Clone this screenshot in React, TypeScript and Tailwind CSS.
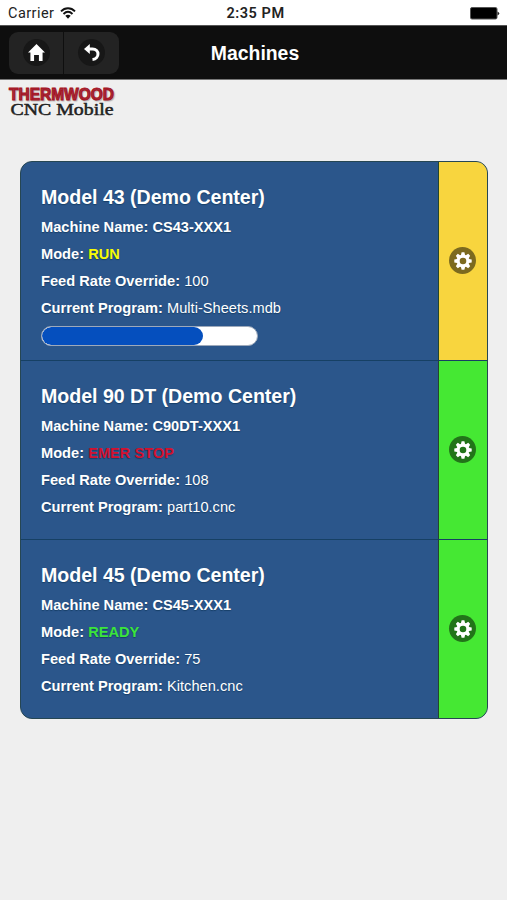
type Machine = {
    title: string;
    name: string;
    mode: string;
    modeClass: string;
    feedRate: number;
    program: string;
    progress?: number;
    rowClass: string;
    sideClass: string;
};

const machines: Machine[] = [
    {
        title: "Model 43 (Demo Center)",
        name: "CS43-XXX1",
        mode: "RUN",
        modeClass: "text-[#f7fb05]",
        feedRate: 100,
        program: "Multi-Sheets.mdb",
        progress: 75,
        rowClass: "h-[199px]",
        sideClass: "bg-[#f8d53e]",
    },
    {
        title: "Model 90 DT (Demo Center)",
        name: "C90DT-XXX1",
        mode: "EMER STOP",
        modeClass: "text-[#d3112f]",
        feedRate: 108,
        program: "part10.cnc",
        rowClass: "h-[179px]",
        sideClass: "bg-[#45e833]",
    },
    {
        title: "Model 45 (Demo Center)",
        name: "CS45-XXX1",
        mode: "READY",
        modeClass: "text-[#3be53b]",
        feedRate: 75,
        program: "Kitchen.cnc",
        rowClass: "h-[178px]",
        sideClass: "bg-[#45e833]",
    },
];

function GearIcon() {
    return (
        <svg viewBox="-9 -9 18 18" className="size-[18px]" fill="#fff">
            <circle r="4.9" fill="none" stroke="#fff" strokeWidth="3.2" />
            {[0, 45, 90, 135, 180, 225, 270, 315].map((angle) => (
                <path key={angle} d="M-2.1-5.8 L-1.4-8.7 H1.4 L2.1-5.8Z" transform={`rotate(${angle})`} />
            ))}
        </svg>
    );
}

function StatusBar() {
    return (
        <div className="grid h-[25px] grid-cols-3 items-center bg-white pt-[3px] pr-[7px] pl-[8px] text-[14.5px] leading-none text-[#222]">
            <div className="flex items-center gap-[6px]">
                <span className="font-[Roboto,sans-serif] tracking-[0.45px]">Carrier</span>
                <svg viewBox="0 0 16 12" className="-mt-[2px] h-[12px] w-[16px]" fill="none" stroke="#111" strokeWidth="1.9">
                    <path d="M1 4.3C5 .2 11 .2 15 4.3M3.5 7C6.3 4.3 9.7 4.3 12.5 7" />
                    <path d="M5.3 8.8C6.9 7.3 9.1 7.3 10.7 8.8L8 11.7Z" fill="#111" stroke="none" />
                </svg>
            </div>
            <span className="pl-[3px] text-center font-[Roboto,sans-serif] font-semibold tracking-[0.55px]">2:35 PM</span>
            <svg viewBox="0 0 31 13" className="-mt-[2px] h-[13px] w-[31px] justify-self-end">
                <rect x="1.5" y=".5" width="26.5" height="11.5" rx="1.5" fill="#000" stroke="#555" />
                <path d="M28.5 4.5Q32 6.5 28.5 8.5Z" fill="#222" />
            </svg>
        </div>
    );
}

function Header() {
    return (
        <header className="grid h-[55px] grid-cols-[1fr_auto_1fr] items-center border-t border-b border-t-[#555] border-b-[#777] bg-[#0e0e0e] pl-[9px]">
            <div className="flex h-[42px] w-[110px] overflow-hidden rounded-[9px] bg-[#232323]">
                <button className="flex w-[55px] items-center justify-center border-r border-[#0f0f0f]">
                    <span className="flex size-[27px] items-center justify-center rounded-full bg-[#171717]">
                        <svg viewBox="0 0 14 14" className="size-[17px]" fill="#fff">
                            <path d="M7 0 0 7H2V14H5V9H9V14H12V7H14Z" />
                        </svg>
                    </span>
                </button>
                <button className="flex flex-1 items-center justify-center">
                    <span className="flex size-[27px] items-center justify-center rounded-full bg-[#171717]">
                        <svg viewBox="0 0 16 18" className="h-[18px] w-[16px]">
                            <path d="M0 5 5.8 0V10Z" fill="#fff" />
                            <path d="M5 5H8.5C15.8 5 15.8 14.8 8.5 15.6" fill="none" stroke="#fff" strokeWidth="3" />
                        </svg>
                    </span>
                </button>
            </div>
            <h1 className="-ml-[6px] pt-[2px] text-[19.4px] leading-none font-bold text-white">Machines</h1>
            <div />
        </header>
    );
}

function Logo() {
    return (
        <svg viewBox="0 -6 110 40" className="h-[40px] w-[110px]">
            <text x="1" y="14" textLength="105" lengthAdjust="spacingAndGlyphs" className="[text-shadow:1px_1px_1px_#8887]" fontFamily="Liberation Sans, sans-serif" fontWeight="bold" fontSize="17" fill="#a80f20" stroke="#a80f20" strokeWidth="1">THERMWOOD</text>
            <text x="2.5" y="28.5" textLength="103" lengthAdjust="spacingAndGlyphs" fontFamily="Liberation Serif, serif" fontSize="17" fill="#222" stroke="#222" strokeWidth=".5">CNC Mobile</text>
        </svg>
    );
}

function MachineRow({ machine }: { machine: Machine }) {
    return (
        <li className={`flex ${machine.rowClass}`}>
            <div className="flex-1 pt-[24px] pl-[20px] text-[14.6px] leading-[27.1px] font-bold tracking-[0.02px] text-white [text-shadow:0_1px_1px_#173f68]">
                <h2 className="mb-[6px] text-[19.6px] leading-[22px] tracking-[-0.02px]">{machine.title}</h2>
                <p>Machine Name: {machine.name}</p>
                <p>Mode: <span className={machine.modeClass}>{machine.mode}</span></p>
                <p>Feed Rate Override: <span className="font-normal">{machine.feedRate}</span></p>
                <p>Current Program: <span className="font-normal">{machine.program}</span></p>
                {machine.progress !== undefined && (
                    <div className="mt-[4px] h-[20px] w-[217px] overflow-hidden rounded-full border border-[#9da9bb] bg-white">
                        <div className="h-full rounded-full bg-[#054fbe]" style={{ width: `${machine.progress}%` }} />
                    </div>
                )}
            </div>
            <button className={`flex w-[49px] items-center justify-center border-l border-[#24452f] pr-px pb-px ${machine.sideClass}`}>
                <span className="flex size-[27px] items-center justify-center rounded-full bg-black/50">
                    <GearIcon />
                </span>
            </button>
        </li>
    );
}

export default function App() {
    return (
        <div className="h-[900px] w-[507px] overflow-hidden bg-[#efefef] font-['Liberation_Sans',Arial,sans-serif]">
            <StatusBar />
            <Header />
            <main>
                <div className="h-[81px] pl-[8px]">
                    <Logo />
                </div>
                <ul className="mr-[19px] ml-[20px] divide-y divide-[#164064] overflow-hidden rounded-[12px] border border-[#264653] bg-[#2b568b]">
                    {machines.map((machine) => (
                        <MachineRow key={machine.title} machine={machine} />
                    ))}
                </ul>
            </main>
        </div>
    );
}
